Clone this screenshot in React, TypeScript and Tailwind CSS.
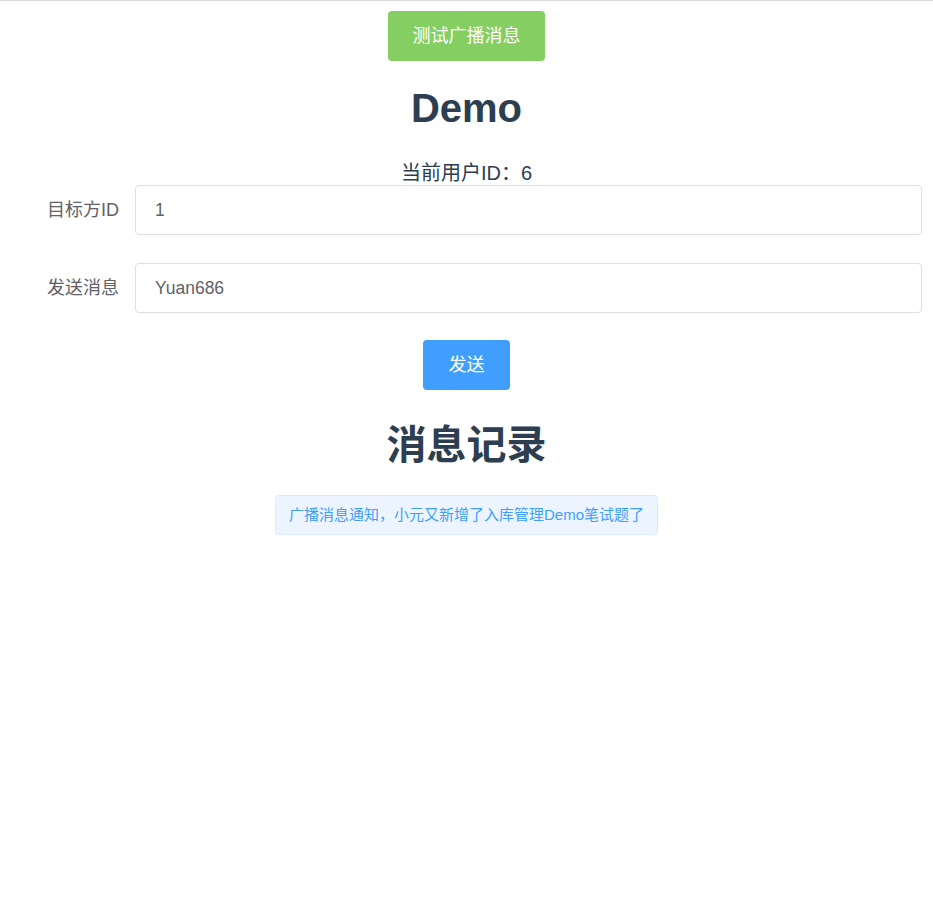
import React from "react";

const font = "font-['Liberation_Sans','Noto_Sans_CJK_SC',sans-serif]";

export default function App() {
  return (
    <div className={`${font} min-h-[922px] border-t border-[#dcdcdc] bg-white pt-[10px] text-[#2c3e50]`}>
      <div className="flex flex-col items-center">
        <button className="h-[50px] w-[157px] rounded-[4px] bg-[#85ce61] text-[18px] text-white">
          测试广播消息
        </button>

        <h1 className="mt-[23px] text-[40px] font-bold leading-[48px]">Demo</h1>

        <p className="mt-[29px] text-[20px] leading-[24px]">当前用户ID：6</p>
      </div>

      <div className="mr-[11px] flex flex-col gap-[28px]">
        <div className="flex items-center">
          <label className="w-[120px] pr-px text-right text-[18px] text-[#606266]">目标方ID</label>
          <input
            defaultValue="1"
            className="ml-[15px] h-[50px] flex-1 rounded-[4px] border border-[#dcdfe6] px-[19px] text-[17.5px] text-[#606266] outline-none"
          />
        </div>
        <div className="flex items-center">
          <label className="w-[120px] pr-px text-right text-[18px] text-[#606266]">发送消息</label>
          <input
            defaultValue="Yuan686"
            className="ml-[15px] h-[50px] flex-1 rounded-[4px] border border-[#dcdfe6] px-[19px] text-[17.5px] text-[#606266] outline-none"
          />
        </div>
      </div>

      <div className="flex flex-col items-center">
        <button className="mt-[27px] h-[50px] w-[87px] rounded-[4px] bg-[#409eff] text-[18px] text-white">
          发送
        </button>

        <h2 className="mt-[31px] text-[40px] font-bold leading-[48px]">消息记录</h2>

        <div className="mt-[26px] flex h-[40px] w-[383px] items-center justify-center rounded-[4px] border border-[#d9ecff] bg-[#ecf5ff] text-[15px] text-[#409eff]">
          广播消息通知，小元又新增了入库管理Demo笔试题了
        </div>
      </div>
    </div>
  );
}
